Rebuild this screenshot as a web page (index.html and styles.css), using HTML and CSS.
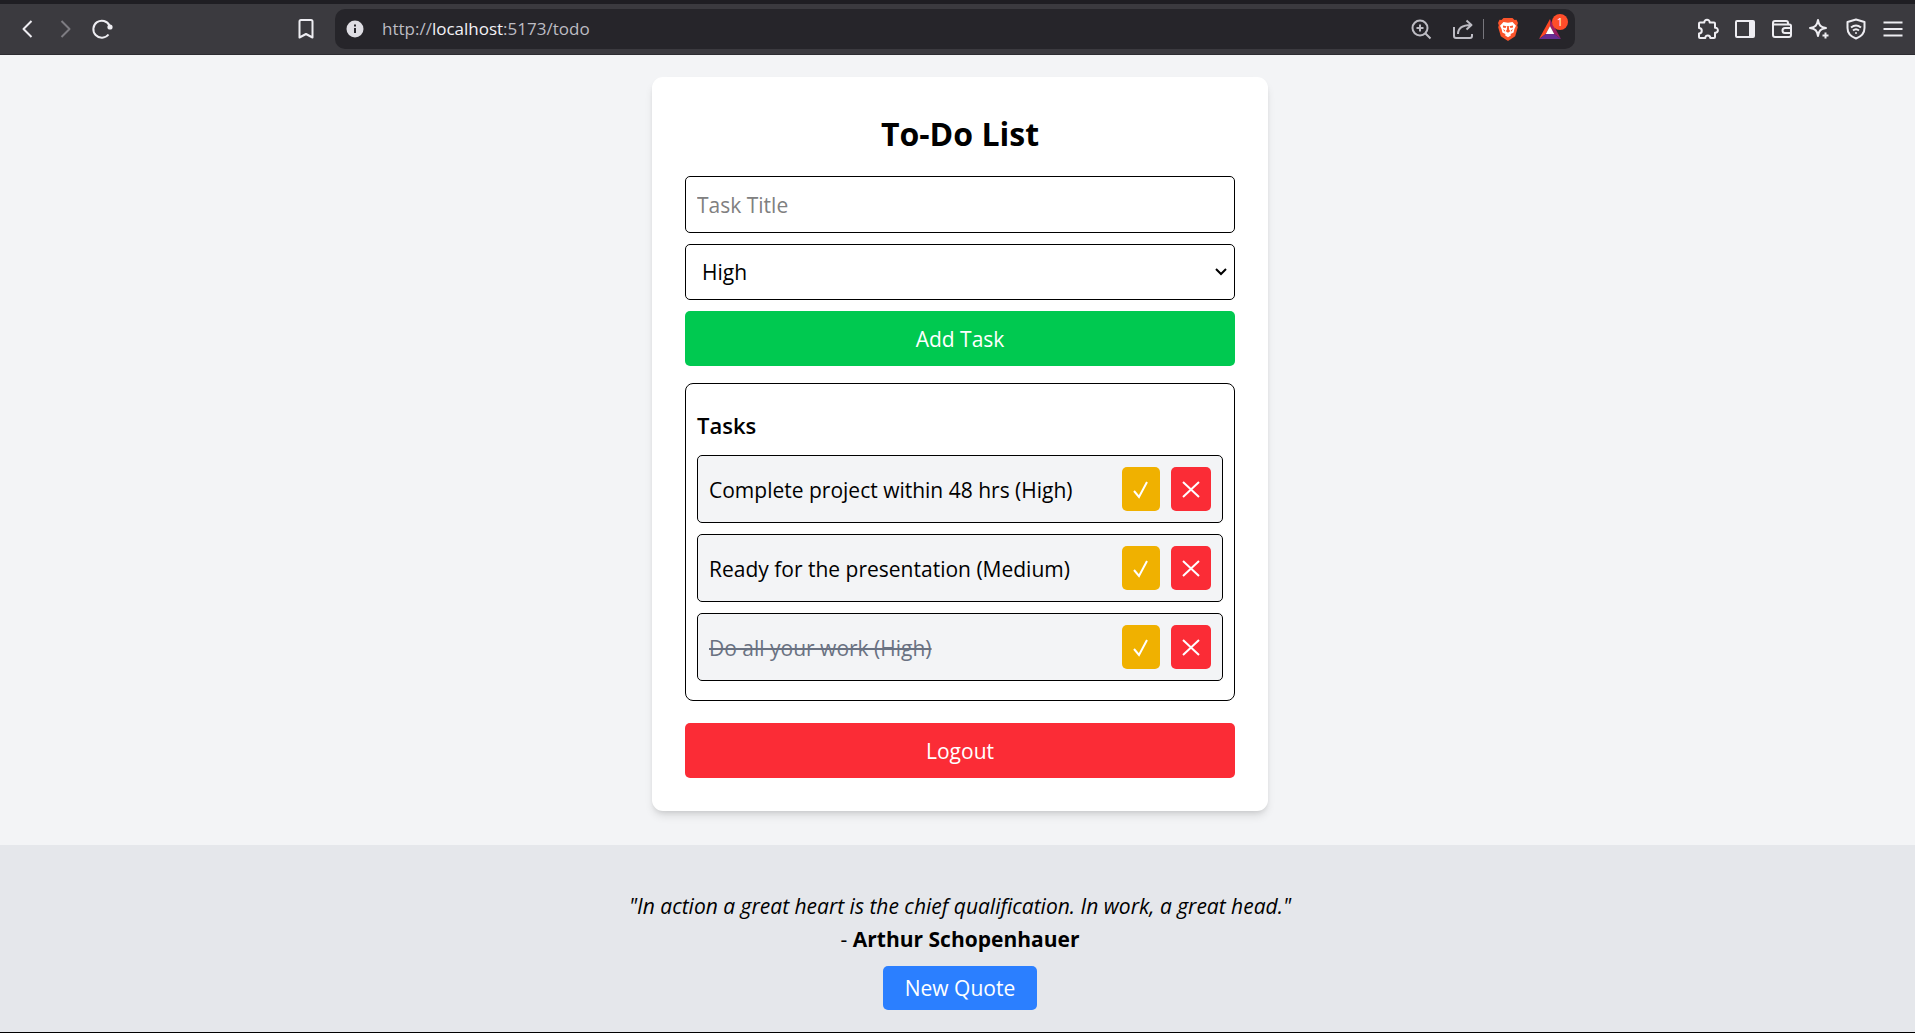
FILE: index.html
```html
<!DOCTYPE html>
<html lang="en">
<head>
<meta charset="utf-8">
<title>To-Do List</title>
<link rel="stylesheet" href="styles.css">
</head>
<body>
<header class="toolbar">
  <nav class="nav-group" aria-label="Navigation">
    <button class="icon-btn" aria-label="Back"><svg width="24" height="24" viewBox="0 0 24 24"><path d="M15.500 4 7.500 12l8 8"/></svg></button>
    <button class="icon-btn dim" aria-label="Forward"><svg width="24" height="24" viewBox="0 0 24 24"><path d="m8.500 4 8 8-8 8"/></svg></button>
    <button class="icon-btn" aria-label="Reload"><svg width="24" height="24" viewBox="0 0 24 24"><path d="M18.500 17.500A8.500 8.500 0 1 1 19.500 8.500"/><circle class="solid" cx="20" cy="10" r="2.600"/></svg></button>
  </nav>
  <button class="icon-btn bookmark" aria-label="Bookmark"><svg width="24" height="24" viewBox="0 0 24 24"><path d="M5.500 4.500q0-1.500 1.500-1.500h10q1.500 0 1.500 1.500V20.500L12 17 5.500 20.500z"/></svg></button>
  <div class="address">
    <svg class="info" width="18" height="18" viewBox="0 0 18 18"><circle cx="9" cy="9" r="8.500" fill="#dedde3"/><path d="M9 8v5M9 4.500v2" stroke="#26252a" stroke-width="2"/></svg>
    <span class="url">http://<b>localhost</b>:5173/todo</span>
    <button class="icon-btn soft" aria-label="Zoom"><svg width="24" height="24" viewBox="0 0 24 24"><circle cx="11" cy="11" r="7.500"/><path d="m16.500 16.500 5 5M11 7.500v7M7.500 11h7"/></svg></button>
    <button class="icon-btn soft share" aria-label="Share"><svg width="24" height="24" viewBox="0 0 24 24"><path d="M3 10v9q0 2 2 2h14q2 0 2-2v-2M7 17c0-6 4-9 13-9M15.500 3.500 20.500 8l-5 4.500"/></svg></button>
    <span class="divider"></span>
    <button class="icon-btn shield" aria-label="Shields"><svg width="24" height="24" viewBox="0 0 24 24"><path class="orange" d="M7.500 1h9l2 2 2-.2L22 6l-.8 2.200.6 2-2.600 9L12 24l-7.200-4.800-2.600-9 .6-2L2 6l1.500-3.200 2 .2z"/><path class="white" d="m7.500 5 4.500.8 4.500-.8L20 8.800l-1.600 3.200-.8 3.500-3 1.500.2 1.500L12 20.200l-2.800-1.700.2-1.500-3-1.500-.8-3.500L4 8.800z"/><path class="orange" d="m7 8.500 3.500.8-1 1.700-2.500-.5zM17 8.500l-3.500.8 1 1.700 2.500-.5zM11.200 9h1.600l.4 4 1.300 1-2.500 1.700L9.500 14l1.300-1zM7 12l2 1.300-.5 1.500zM17 12l-2 1.300.5 1.500z"/></svg></button>
    <button class="icon-btn rewards" aria-label="Rewards"><svg width="24" height="24" viewBox="0 0 24 24"><path fill="#ff4724" d="M12 2v7l-4.200 8L1 22z"/><path fill="#9e1f63" d="M12 2v7l4.200 8L23 22z"/><path fill="#662d91" d="m1 22 6.800-5h8.400l6.800 5z"/><path fill="#fff" d="m12 9 4.200 8H7.800z"/></svg><span class="badge">1</span></button>
  </div>
  <div class="tools">
    <button class="icon-btn" aria-label="Extensions"><svg width="24" height="24" viewBox="0 0 24 24"><path d="M4 5.500h4.300C8 1.800 14 1.800 13.700 5.500H18q1 0 1 1v4.200c3.800-.5 3.800 5.500 0 5V20q0 1-1 1h-3.700c0-3.500-5-3.500-5 0H4q-1 0-1-1v-3.500c3.700 0 3.700-5.500 0-5.500V6.500q0-1 1-1z"/></svg></button>
    <button class="icon-btn" aria-label="Side panel"><svg width="24" height="24" viewBox="0 0 24 24"><rect x="3" y="4" width="18" height="16" rx="1"/><path class="solid" d="M16 4h5v16h-5z"/></svg></button>
    <button class="icon-btn" aria-label="Wallet"><svg width="24" height="24" viewBox="0 0 24 24"><path d="M3 6v12q0 2 2 2h14q2 0 2-2V9q0-1.500-1.500-1.500h-15Q3 7.500 3 6q0-2 2-2h11q2 0 2 2v1.500M21 11h-6q-2.500 0-2.500 2.500T15 16h6"/></svg></button>
    <button class="icon-btn" aria-label="Assistant"><svg width="24" height="24" viewBox="0 0 24 24"><path d="M11 3c1 5.500 2.500 7 8 8-5.500 1-7 2.500-8 8-1-5.500-2.500-7-8-8 5.500-1 7-2.500 8-8z"/><path d="M18.500 15.500v6M15.500 18.500h6"/></svg></button>
    <button class="icon-btn" aria-label="VPN"><svg width="24" height="24" viewBox="0 0 24 24"><path d="M12 2.500 20.500 5v6c0 5-3 8.500-8.500 10.500C6.500 19.500 3.500 16 3.500 11V5zM7 10.500q5-4 10 0M9 13.500q3-2.500 6 0"/><circle class="solid" cx="12" cy="16" r="1"/></svg></button>
    <button class="icon-btn" aria-label="Menu"><svg width="24" height="24" viewBox="0 0 24 24"><path d="M2.500 5.500h19M2.500 12h19M2.500 18.500h19"/></svg></button>
  </div>
</header>
<main class="page">
  <section class="card">
    <h1 class="title">To-Do List</h1>
    <form class="form">
      <input class="field" type="text" placeholder="Task Title" aria-label="Task Title">
      <select class="field select" aria-label="Priority"><option>High</option><option>Medium</option><option>Low</option></select>
      <button class="btn add" type="button">Add Task</button>
    </form>
    <div class="tasks">
      <h2 class="subtitle">Tasks</h2>
      <ul class="list">
        <li class="task"><span class="name">Complete project within 48 hrs (High)</span><button class="act done" aria-label="Complete"><svg width="22" height="22" viewBox="0 0 22 22"><path d="m4 13 5 6 8-15"/></svg></button><button class="act remove" aria-label="Delete"><svg width="22" height="22" viewBox="0 0 22 22"><path d="m3 4 16 15M19 4 3 19"/></svg></button></li>
        <li class="task"><span class="name">Ready for the presentation (Medium)</span><button class="act done" aria-label="Complete"><svg width="22" height="22" viewBox="0 0 22 22"><path d="m4 13 5 6 8-15"/></svg></button><button class="act remove" aria-label="Delete"><svg width="22" height="22" viewBox="0 0 22 22"><path d="m3 4 16 15M19 4 3 19"/></svg></button></li>
        <li class="task"><span class="name finished">Do all your work (High)</span><button class="act done" aria-label="Complete"><svg width="22" height="22" viewBox="0 0 22 22"><path d="m4 13 5 6 8-15"/></svg></button><button class="act remove" aria-label="Delete"><svg width="22" height="22" viewBox="0 0 22 22"><path d="m3 4 16 15M19 4 3 19"/></svg></button></li>
      </ul>
    </div>
    <button class="btn logout" type="button">Logout</button>
  </section>
</main>
<footer class="quote">
  <p class="words">"In action a great heart is the chief qualification. In work, a great head."</p>
  <p class="author">- <strong>Arthur Schopenhauer</strong></p>
  <button class="btn new" type="button">New Quote</button>
</footer>
</body>
</html>
```
FILE: styles.css
```css
* { box-sizing: border-box; margin: 0; padding: 0; }

body {
  min-height: 100vh;
  display: flex;
  flex-direction: column;
  background: #f3f4f6;
  color: #000;
  font: 21px/33px "Segoe UI", "Open Sans", "Noto Sans", sans-serif;
}

button, input, select { font: inherit; border: 0; }

/* Browser toolbar */
.toolbar {
  display: flex;
  align-items: center;
  height: 55px;
  padding: 0 10px 0 16px;
  background: #3b3a3f;
  border-top: 4px solid #1f1e23;
  border-bottom: 1px solid #2d2c31;
}
.nav-group { display: flex; gap: 13px; }
.icon-btn {
  display: flex;
  flex: none;
  background: none;
  color: #eeedf2;
}
.icon-btn svg {
  fill: none;
  stroke: currentColor;
  stroke-width: 2;
  stroke-linejoin: round;
}
.icon-btn .solid { fill: currentColor; stroke: none; }
.dim { color: #7d7c82; }
.soft { color: #bdbcc3; }
.bookmark { margin-left: 180px; }
.address {
  display: flex;
  flex: 1;
  align-items: center;
  height: 40px;
  margin: 0 121px 0 17px;
  padding: 0 11px;
  background: #26252a;
  border-radius: 10px;
}
.info { flex: none; }
.url {
  flex: 1;
  margin-left: 18px;
  color: #bdbcc3;
  font-size: 17px;
  line-height: 24px;
}
.url b { color: #f3f2f7; font-weight: 400; }
.share { margin-left: 18px; }
.divider { width: 1px; height: 20px; margin: 0 12px 0 8px; background: #77767c; }
.icon-btn .orange { fill: #fb542b; stroke: none; }
.icon-btn .white { fill: #fff; stroke: none; }
.rewards { position: relative; margin: 0 2px 0 18px; }
.rewards svg { stroke: none; }
.badge {
  position: absolute;
  top: -3px;
  right: -6px;
  width: 16px;
  border-radius: 8px;
  background: #ff4d2a;
  color: #fff;
  font-size: 11px;
  line-height: 16px;
  text-align: center;
}
.tools { display: flex; gap: 13px; }

/* To-do card */
.page { padding: 22px 22px 34px 27px; }
.card {
  max-width: 616px;
  margin: 0 auto;
  padding: 33px;
  background: #fff;
  border-radius: 11px;
  box-shadow: 0 6px 8px -1px #0000001a, 0 3px 5px -2px #0000001a;
}
.title {
  padding-top: 2px;
  margin-bottom: 20px;
  font-size: 32px;
  line-height: 44px;
  text-align: center;
}
.form { display: flex; flex-direction: column; gap: 11px; }
.field {
  width: 100%;
  height: 57px;
  padding: 0 11px;
  background: #fff;
  border: 1px solid #000;
  border-radius: 5px;
  color: #000;
}
.field::placeholder { color: #808080; }
.select {
  height: 56px;
  padding: 0 33px 0 16px;
  appearance: none;
  background: #fff url("data:image/svg+xml,%3Csvg xmlns='http://www.w3.org/2000/svg' width='14' height='10'%3E%3Cpath d='M2 2l5 5 5-5' fill='none' stroke='%23000' stroke-width='2'/%3E%3C/svg%3E") no-repeat right 6px center;
}
.btn {
  height: 55px;
  padding-top: 1px;
  border-radius: 5px;
  color: #fff;
}
.add { background: #00c950; }
.tasks {
  margin: 17px 0 22px;
  padding: 11px 11px 19px;
  border: 1px solid #000;
  border-radius: 8px;
}
.subtitle {
  margin: 11px 0;
  font-size: 22px;
  font-weight: 600;
  line-height: 38px;
}
.list { display: grid; gap: 11px; list-style: none; }
.task {
  display: flex;
  align-items: center;
  gap: 11px;
  padding: 11px;
  background: #f3f4f6;
  border: 1px solid #000;
  border-radius: 5px;
}
.name { flex: 1; padding-top: 2px; }
.finished { color: #6a7282; text-decoration: line-through; }
.act {
  display: flex;
  align-items: center;
  justify-content: center;
  width: 38px;
  height: 44px;
  border-radius: 5px;
}
.act svg { fill: none; stroke: #fff; stroke-width: 2; }
.done { background: #f0b100; }
.remove { width: 40px; background: #fb2c36; }
.logout { display: block; width: 100%; background: #fb2c36; }

/* Quote */
.quote {
  flex: 1;
  padding: 45px 22px 21px 27px;
  background: #e5e7eb;
  border-bottom: 1px solid #000;
  text-align: center;
}
.words { font-style: italic; }
.new { height: 44px; margin-top: 10px; padding: 1px 22px 0; background: #2b7fff; }
```
